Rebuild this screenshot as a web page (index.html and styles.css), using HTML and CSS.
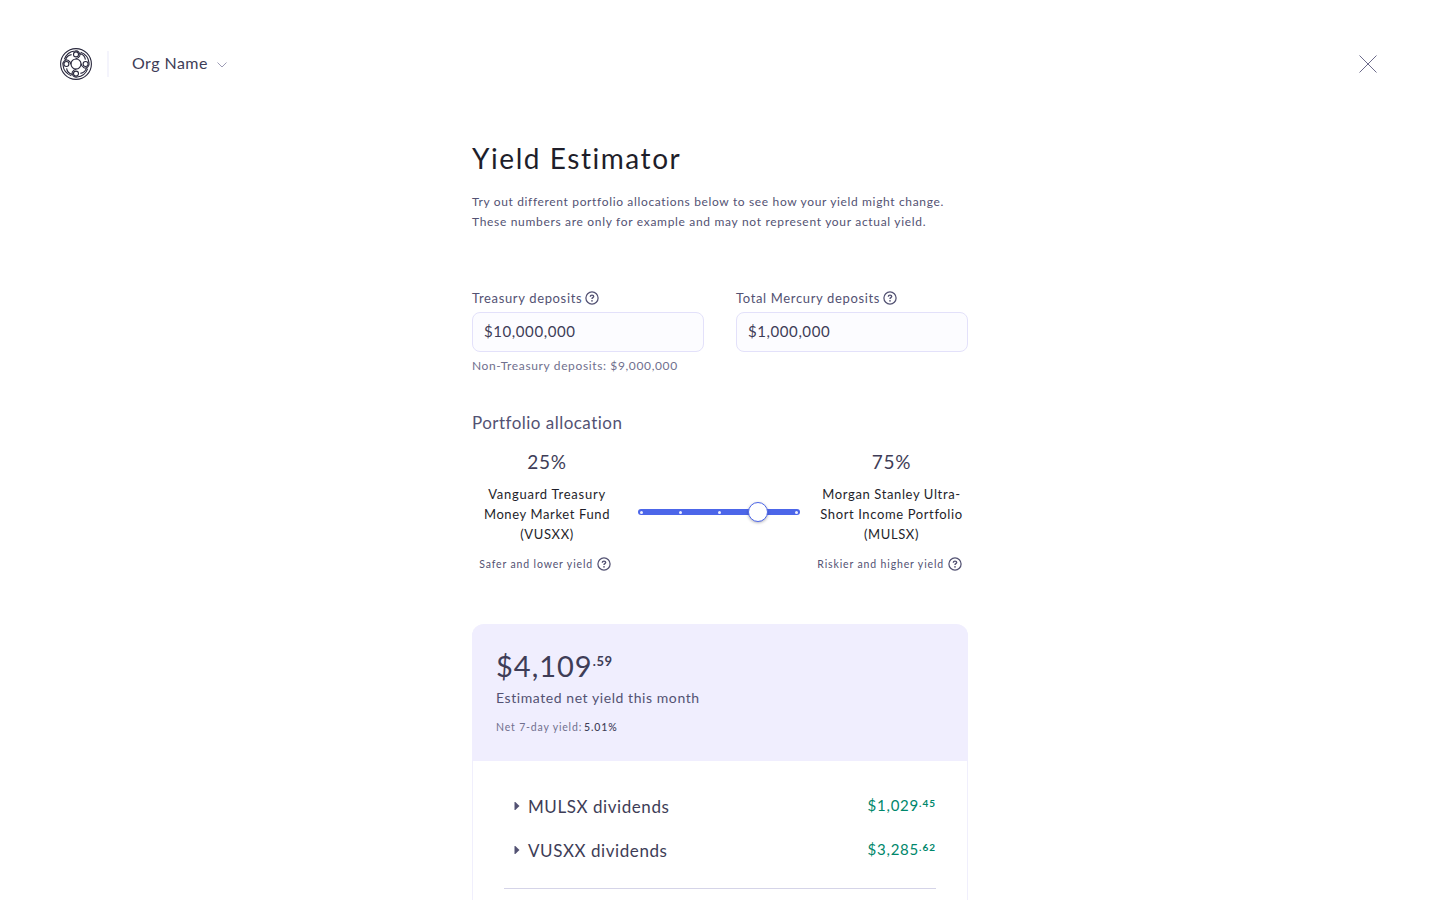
FILE: index.html
```html
<!DOCTYPE html>
<html lang="en">
<head>
<meta charset="utf-8">
<title>Yield Estimator</title>
<link rel="stylesheet" href="styles.css">
</head>
<body>
<svg class="defs" width="0" height="0">
  <symbol id="help" viewBox="0 0 14 14">
    <circle cx="7" cy="7" r="6.1" fill="none" stroke="currentColor" stroke-width="1.25"/>
    <path d="M5.300 5.700c0-1 .7-1.600 1.700-1.600s1.700.6 1.700 1.500c0 1.100-1.700 1.100-1.700 2.300" fill="none" stroke="currentColor" stroke-width="1.4"/>
    <circle cx="7" cy="9.8" r=".85" fill="currentColor"/>
  </symbol>
</svg>
<header class="header">
  <svg class="logo" viewBox="-16 -16 32 32" fill="none" stroke="currentColor" stroke-width="1.1">
    <circle r="15.4"/>
    <circle r="5"/>
    <g id="knot"><circle cy="-9.6" r="2.5"/><path d="M-11.700 -4.600A12.600 12.600 0 0 1 -1 -13A3.900 3.900 0 0 1 3.700 -8C2.800 -6.300 1.500 -5.400 -.4 -5M3.900 -10.500C7.200 -9.600 9 -7.400 9.400 -4.400"/></g>
    <use href="#knot" transform="rotate(90)"/>
    <use href="#knot" transform="rotate(180)"/>
    <use href="#knot" transform="rotate(270)"/>
  </svg>
  <span class="divider"></span>
  <span class="org">Org Name</span>
  <svg class="chevron" viewBox="0 0 10 6"><path d="M.5 .5L5 5L9.500 .5" fill="none" stroke="currentColor"/></svg>
  <svg class="close" viewBox="0 0 18 18"><path d="M.5 .5L17.500 17.500M17.500 .5L.5 17.500" fill="none" stroke="currentColor"/></svg>
</header>
<main class="main">
  <h1 class="title">Yield Estimator</h1>
  <p class="intro"><span class="intro-a">Try out different portfolio allocations below to see how your yield might change.</span><br><span class="intro-b">These numbers are only for example and may not represent your actual yield.</span></p>
  <div class="fields">
    <div class="field">
      <div class="label"><span>Treasury deposits</span><svg class="help"><use href="#help"/></svg></div>
      <div class="input">$10,000,000</div>
      <div class="hint">Non-Treasury deposits: $9,000,000</div>
    </div>
    <div class="field">
      <div class="label"><span>Total Mercury deposits</span><svg class="help"><use href="#help"/></svg></div>
      <div class="input">$1,000,000</div>
    </div>
  </div>
  <h2 class="subtitle">Portfolio allocation</h2>
  <div class="allocation">
    <div class="fund">
      <div class="percent">25%</div>
      <div class="name"><span class="name-wide">Vanguard Treasury</span><br>Money Market Fund<br>(VUSXX)</div>
      <div class="risk"><span>Safer and lower yield</span><svg class="help"><use href="#help"/></svg></div>
    </div>
    <div class="slider"><i></i><i></i><i></i><i></i><i></i><span class="thumb"></span></div>
    <div class="fund fund-right">
      <div class="percent">75%</div>
      <div class="name">Morgan Stanley Ultra-<br>Short Income Portfolio<br>(MULSX)</div>
      <div class="risk"><span>Riskier and higher yield</span><svg class="help"><use href="#help"/></svg></div>
    </div>
  </div>
  <section class="card">
    <div class="summary">
      <div class="total"><span class="total-int">$4,109</span><span class="total-dec">.59</span></div>
      <div class="caption">Estimated net yield this month</div>
      <div class="rate"><span>Net 7-day yield:</span><span class="rate-value">5.01%</span></div>
    </div>
    <div class="rows">
      <div class="row"><svg class="caret" viewBox="0 0 6 8"><path d="M.5 0h.8L5.500 4L1.300 8H.5z" fill="currentColor"/></svg><span>MULSX dividends</span><span class="amount">$1,029<b>.45</b></span></div>
      <div class="row"><svg class="caret" viewBox="0 0 6 8"><path d="M.5 0h.8L5.500 4L1.300 8H.5z" fill="currentColor"/></svg><span>VUSXX dividends</span><span class="amount">$3,285<b>.62</b></span></div>
    </div>
  </section>
</main>
</body>
</html>
```
FILE: styles.css
```css
* { box-sizing: border-box; }
body { margin: 0; height: 900px; overflow: hidden; background: #fff; color: #3e3d57; font-family: Lato, sans-serif; }
.defs { position: absolute; }
svg { display: block; flex: none; }
.header { height: 128px; padding: 0 63px 0 60px; display: flex; align-items: center; }
.logo { width: 32px; height: 32px; color: #27263b; }
.divider { width: 2px; height: 26px; margin: 0 23px 0 15px; background: #f4f4fc; }
.org { font-size: 16px; letter-spacing: .45px; line-height: 24px; padding-bottom: 2px; }
.chevron { width: 10px; height: 6px; margin: 1px 0 0 9px; color: #9d9cb5; }
.close { width: 18px; height: 18px; margin-left: auto; color: #6c6b8b; }
.main { width: 496px; margin: 0 auto; }
.title { margin: 12px 0 0; font-size: 28px; line-height: 36px; font-weight: 400; letter-spacing: 1.55px; color: #1e1e2a; }
.intro { margin: 16px 0 0; font-size: 12px; line-height: 20px; color: #535273; }
.intro-a { letter-spacing: .65px; }
.intro-b { letter-spacing: .685px; }
.fields { display: flex; gap: 32px; margin-top: 56px; }
.field { flex: 1; }
.label { height: 20px; display: flex; align-items: center; gap: 3px; font-size: 13px; letter-spacing: .65px; color: #535273; }
.help { width: 14px; height: 14px; color: #535273; }
.label .help { margin-top: -1px; }
.input { height: 40px; margin-top: 4px; padding: 0 11px 2px; display: flex; align-items: center; border: 1px solid #e3e1fa; border-radius: 8px; background: #fcfcff; font-size: 15px; letter-spacing: .58px; color: #3e3d57; }
.hint { margin-top: 4px; font-size: 12px; line-height: 20px; letter-spacing: .63px; color: #70708e; }
.subtitle { margin: 35px 0 0; font-size: 17px; line-height: 24px; font-weight: 400; letter-spacing: .47px; color: #535273; }
.allocation { display: flex; margin-top: 13px; }
.fund { width: 150px; text-align: center; }
.fund-right { width: 153px; margin-left: 15px; }
.percent { font-size: 19px; line-height: 28px; letter-spacing: .8px; }
.name { margin-top: 8px; font-size: 13px; line-height: 20px; letter-spacing: .62px; color: #1e1e2a; }
.name-wide { letter-spacing: .74px; }
.risk { display: flex; align-items: center; justify-content: flex-end; gap: 4px; height: 20px; margin-top: 10px; font-size: 10.5px; letter-spacing: .86px; color: #535273; }
.fund .risk { padding-right: 11px; }
.fund-right .risk { padding-right: 6px; }
.slider { position: relative; width: 162px; height: 6px; margin: 61px 0 0 16px; padding: 0 2px; display: flex; align-items: center; justify-content: space-between; border-radius: 3px; background: #4c66e9; }
.slider i { width: 3px; height: 3px; border-radius: 50%; background: #eef0ff; }
.thumb { position: absolute; left: 110px; top: -7px; width: 20px; height: 20px; border: 1px solid #4c66e9; border-radius: 50%; background: #fff; box-shadow: 0 1px 3px rgba(39, 38, 59, .35); }
.card { height: 300px; margin-top: 50px; border-radius: 12px 12px 0 0; border: 1px solid #f0effc; border-top: 0; }
.summary { height: 137px; margin: 0 -1px; padding: 23px 24px 0; border-radius: 12px 12px 0 0; background: #f0eefe; }
.total { display: flex; height: 38px; line-height: 38px; }
.total-int { font-size: 29px; letter-spacing: 1px; }
.total-dec { font-size: 13px; line-height: 28px; font-weight: 700; letter-spacing: .6px; }
.caption { margin-top: 3px; font-size: 14px; line-height: 20px; letter-spacing: .57px; color: #535273; }
.rate { display: flex; gap: 2px; margin-top: 10px; font-size: 10.5px; line-height: 18px; letter-spacing: .83px; color: #70708e; }
.rate-value { color: #3e3d57; font-weight: 500; }
.rows { margin: 23px 31px 0; padding-bottom: 16px; border-bottom: 1px solid #d5d4e8; }
.row { height: 44px; padding-left: 10px; display: flex; align-items: center; font-size: 17px; letter-spacing: .57px; }
.caret { width: 6px; height: 8px; margin-right: 8px; color: #535273; }
.amount { margin-left: auto; padding-bottom: 2px; display: flex; align-items: center; font-size: 15px; letter-spacing: .75px; color: #00876b; }
.amount b { font-size: 10px; line-height: 14px; margin-top: -4px; letter-spacing: 1px; }
```
